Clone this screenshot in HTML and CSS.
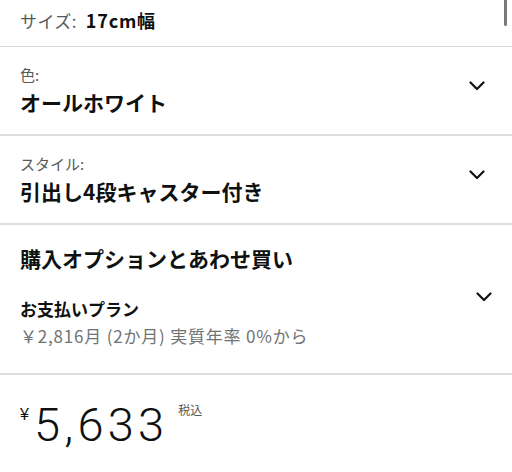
FILE: index.html
```html
<!DOCTYPE html>
<html lang="ja">
<head>
<meta charset="utf-8">
<link rel="stylesheet" href="styles.css">
</head>
<body>
<div class="page">
  <div class="scrollbar"></div>
  <section class="size-row">
    <span class="size-label">サイズ:</span>
    <span class="size-value">17cm幅</span>
  </section>
  <div class="divider thin"></div>
  <section class="option">
    <div class="option-text">
      <div class="option-label">色:</div>
      <div class="option-value">オールホワイト</div>
    </div>
    <svg class="chev" width="16" height="10" viewBox="0 0 16 10"><polyline points="1.5,1.5 8,8 14.5,1.5" fill="none" stroke="#111" stroke-width="2.2" stroke-linecap="round" stroke-linejoin="round"/></svg>
  </section>
  <div class="divider"></div>
  <section class="option">
    <div class="option-text">
      <div class="option-label">スタイル:</div>
      <div class="option-value">引出し4段キャスター付き</div>
    </div>
    <svg class="chev" width="16" height="10" viewBox="0 0 16 10"><polyline points="1.5,1.5 8,8 14.5,1.5" fill="none" stroke="#111" stroke-width="2.2" stroke-linecap="round" stroke-linejoin="round"/></svg>
  </section>
  <div class="divider"></div>
  <section class="purchase">
    <h2 class="purchase-title">購入オプションとあわせ買い</h2>
    <div class="plan">
      <div class="plan-text">
        <div class="plan-title">お支払いプラン</div>
        <div class="plan-sub">￥2,816月 (2か月) 実質年率 0%から</div>
      </div>
      <svg class="chev plan-chev" width="16" height="10" viewBox="0 0 16 10"><polyline points="1.5,1.5 8,8 14.5,1.5" fill="none" stroke="#111" stroke-width="2.2" stroke-linecap="round" stroke-linejoin="round"/></svg>
    </div>
  </section>
  <div class="divider"></div>
  <section class="price">
    <span class="price-symbol">¥</span>
    <span class="price-whole">5,633</span>
    <span class="price-tax">税込</span>
  </section>
</div>
</body>
</html>
```

FILE: styles.css
```css
html, body {
  margin: 0;
  padding: 0;
  background: #ffffff;
}

.page {
  position: relative;
  width: 512px;
  font-family: "Noto Sans CJK JP", "Noto Sans", sans-serif;
  color: #0f1111;
}

.scrollbar {
  position: absolute;
  top: 0;
  left: 504px;
  width: 3px;
  height: 26px;
  background: #7a7a7a;
  border-radius: 0 0 2px 2px;
}

.size-row {
  box-sizing: border-box;
  height: 46px;
  padding: 8px 20px 0;
  display: flex;
  align-items: baseline;
  gap: 9px;
  line-height: 24px;
}

.size-label {
  font-size: 17px;
  letter-spacing: 0.4px;
  color: #565959;
}

.size-value {
  font-size: 18px;
  font-weight: 700;
  letter-spacing: 0.8px;
}

.divider {
  height: 2px;
  background: #dedede;
}

.divider.thin {
  height: 1px;
  background: #d5d5d5;
}

.option {
  box-sizing: border-box;
  height: 87px;
  padding: 0 27px 0 20px;
  display: flex;
  align-items: center;
}

.option-text {
  flex: 1;
}

.option-label {
  font-size: 15px;
  line-height: 20px;
  color: #565959;
}

.option-value {
  margin-top: 3px;
  font-size: 21px;
  line-height: 28px;
  font-weight: 700;
}

.chev {
  display: block;
  flex: none;
  margin-bottom: 10px;
}

.purchase {
  box-sizing: border-box;
  height: 148px;
  padding: 19px 20px 0;
}

.purchase-title {
  margin: 0;
  font-size: 21px;
  line-height: 28px;
  font-weight: 700;
}

.plan {
  margin-top: 25px;
  display: flex;
  align-items: flex-start;
}

.plan-text {
  flex: 1;
}

.plan-title {
  font-size: 17px;
  line-height: 24px;
  font-weight: 700;
}

.plan-sub {
  margin-top: 4px;
  font-size: 17px;
  line-height: 22px;
  color: #6f7373;
  letter-spacing: 0.8px;
}

.plan-chev {
  margin: -5px 0 0;
}

.price {
  box-sizing: border-box;
  height: 97px;
  padding: 26px 20px 0;
  display: flex;
  align-items: flex-start;
}

.price-symbol {
  margin-top: 6px;
  font-family: "Liberation Sans", sans-serif;
  font-size: 16px;
  line-height: 16px;
  color: #0f1111;
}

.price-whole {
  margin-left: 5px;
  font-family: Roboto, "Liberation Sans", sans-serif;
  font-weight: 300;
  font-size: 47px;
  line-height: 47px;
  letter-spacing: 4.2px;
  color: #0f1111;
}

.price-tax {
  margin-left: 10px;
  margin-top: 3px;
  font-size: 12px;
  line-height: 12px;
  color: #565959;
}
```
